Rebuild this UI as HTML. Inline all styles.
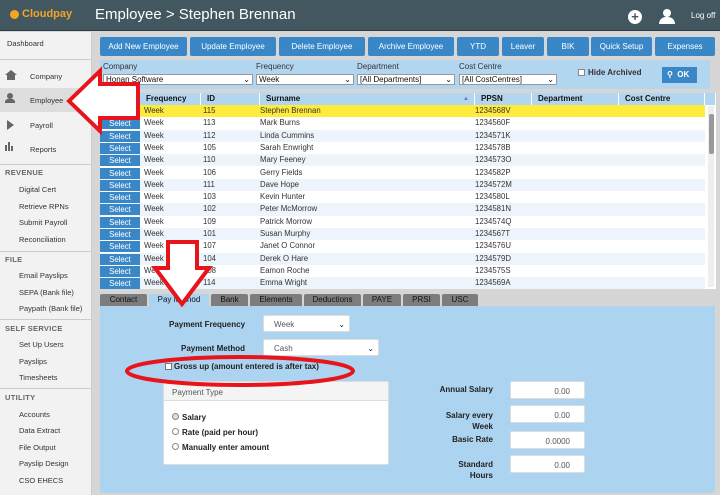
<!DOCTYPE html>
<html><head><meta charset="utf-8"><style>
*{box-sizing:border-box;margin:0;padding:0}
body{width:720px;height:495px;overflow:hidden;font-family:"Liberation Sans",Arial,sans-serif;font-size:8px;color:#222;position:relative;background:#d6d6d6}
.a{position:absolute}
.hdr{left:0;top:0;width:720px;height:31px;background:#435761;border-bottom:1px solid #2e3e46}
.side{left:0;top:32px;width:92px;height:463px;background:#f2f2f2;border-right:1px solid #ccc}
.si{position:absolute;left:19px;font-size:7.5px;color:#333}
.sh{position:absolute;left:5px;font-size:7.5px;color:#666;font-weight:bold;letter-spacing:.3px}
.sep{position:absolute;left:0;width:92px;height:1px;background:#ccc}
.btn{position:absolute;top:37px;height:19px;background:#3a87c8;color:#fff;font-size:8px;text-align:center;line-height:19px;border-radius:2px}
.filt{left:100px;top:60px;width:610px;height:29px;background:#b3d6f0}
.sel{position:absolute;height:11px;background:#fff;border:1px solid #999;font-size:8px;line-height:9px;padding-left:2px;color:#111}
.row{position:absolute;left:100px;width:605px;height:12.3px;font-size:7.8px;line-height:12px;color:#333}
.row span{position:absolute}
.sb{left:0;width:40px;height:11px;background:#3a87c8;color:#fff;text-align:center;top:1px;line-height:11px}
.th{position:absolute;top:93px;height:12px;background:#b3d6f0;font-weight:bold;font-size:8px;line-height:12px;border-right:1px solid #fff;padding-left:6px;color:#111}
.tab{position:absolute;top:294px;height:12px;background:#7d7d7d;color:#111;font-size:8px;text-align:center;line-height:12px;border-radius:2px 2px 0 0}
.panel{left:100px;top:306px;width:615px;height:187px;background:#acd3f0;border-radius:0 0 3px 3px}
.lb{position:absolute;font-weight:bold;font-size:8px;color:#222}
.inp{position:absolute;background:#fff;border:1px solid #ddd;border-radius:2px;font-size:8px;color:#555}
</style></head><body>
<div class="a hdr"></div>
<div class="a" style="left:10px;top:10px;width:9px;height:9px;border-radius:50%;background:#f4a623"></div>
<div class="a" style="left:22px;top:8px;color:#f0a52a;font-weight:bold;font-size:11px">Cloudpay</div>
<div class="a" style="left:95px;top:6px;color:#fff;font-size:15px">Employee &gt; Stephen Brennan</div>
<div class="a" style="left:628px;top:10px;width:14px;height:14px;border-radius:50%;background:#fff;color:#435761;font-weight:bold;font-size:13px;line-height:13px;text-align:center">+</div>
<div class="a" style="left:663px;top:9px;width:8px;height:8px;border-radius:50%;background:#fff"></div>
<div class="a" style="left:659px;top:17px;width:16px;height:7px;border-radius:7px 7px 0 0;background:#fff"></div>
<div class="a" style="left:691px;top:11px;color:#fff;font-size:8px">Log off</div>

<div class="a side"></div>
<div class="a" style="left:0;top:88px;width:92px;height:24px;background:#ddd"></div>
<div class="si" style="left:7px;top:39px">Dashboard</div>
<div class="sep" style="top:59px"></div>
<div class="a" style="left:5px;top:70px;width:0;height:0;border-left:6px solid transparent;border-right:6px solid transparent;border-bottom:5px solid #666"></div>
<div class="a" style="left:7px;top:75px;width:8px;height:5px;background:#666"></div>
<div class="si" style="left:30px;top:72px">Company</div>
<div class="a" style="left:7px;top:93px;width:6px;height:6px;border-radius:50%;background:#666"></div>
<div class="a" style="left:5px;top:99px;width:10px;height:4px;background:#666;border-radius:3px 3px 0 0"></div>
<div class="si" style="left:30px;top:96px">Employee</div>
<div class="a" style="left:7px;top:120px;width:0;height:0;border-top:5px solid transparent;border-bottom:5px solid transparent;border-left:7px solid #666"></div>
<div class="si" style="left:30px;top:121px">Payroll</div>
<div class="a" style="left:5px;top:145px;width:2px;height:6px;background:#666"></div>
<div class="a" style="left:8px;top:142px;width:2px;height:9px;background:#666"></div>
<div class="a" style="left:11px;top:146px;width:2px;height:5px;background:#666"></div>
<div class="si" style="left:30px;top:145px">Reports</div>
<div class="sep" style="top:164px"></div>
<div class="sh" style="top:168px">REVENUE</div>
<div class="si" style="top:185px">Digital Cert</div>
<div class="si" style="top:202px">Retrieve RPNs</div>
<div class="si" style="top:218px">Submit Payroll</div>
<div class="si" style="top:235px">Reconciliation</div>
<div class="sep" style="top:251px"></div>
<div class="sh" style="top:255px">FILE</div>
<div class="si" style="top:271px">Email Payslips</div>
<div class="si" style="top:288px">SEPA (Bank file)</div>
<div class="si" style="top:304px">Paypath (Bank file)</div>
<div class="sep" style="top:319px"></div>
<div class="sh" style="top:324px">SELF SERVICE</div>
<div class="si" style="top:340px">Set Up Users</div>
<div class="si" style="top:357px">Payslips</div>
<div class="si" style="top:373px">Timesheets</div>
<div class="sep" style="top:388px"></div>
<div class="sh" style="top:393px">UTILITY</div>
<div class="si" style="top:410px">Accounts</div>
<div class="si" style="top:426px">Data Extract</div>
<div class="si" style="top:443px">File Output</div>
<div class="si" style="top:459px">Payslip Design</div>
<div class="si" style="top:476px">CSO EHECS</div>

<div class="btn" style="left:100px;width:87px">Add New Employee</div>
<div class="btn" style="left:190px;width:86px">Update Employee</div>
<div class="btn" style="left:279px;width:86px">Delete Employee</div>
<div class="btn" style="left:368px;width:86px">Archive Employee</div>
<div class="btn" style="left:457px;width:42px">YTD</div>
<div class="btn" style="left:502px;width:42px">Leaver</div>
<div class="btn" style="left:547px;width:42px">BIK</div>
<div class="btn" style="left:591px;width:61px">Quick Setup</div>
<div class="btn" style="left:655px;width:60px">Expenses</div>

<div class="a filt"></div>
<div class="a" style="left:103px;top:62px;font-size:8px;color:#333">Company</div>
<div class="a" style="left:256px;top:62px;font-size:8px;color:#333">Frequency</div>
<div class="a" style="left:357px;top:62px;font-size:8px;color:#333">Department</div>
<div class="a" style="left:459px;top:62px;font-size:8px;color:#333">Cost Centre</div>
<div class="sel" style="left:103px;top:74px;width:150px">Honan Software<span style="position:absolute;right:2px">⌄</span></div>
<div class="sel" style="left:256px;top:74px;width:98px">Week<span style="position:absolute;right:2px">⌄</span></div>
<div class="sel" style="left:357px;top:74px;width:98px">[All Departments]<span style="position:absolute;right:2px">⌄</span></div>
<div class="sel" style="left:459px;top:74px;width:98px">[All CostCentres]<span style="position:absolute;right:2px">⌄</span></div>
<div class="a" style="left:578px;top:69px;width:7px;height:7px;background:#fff;border:1px solid #888"></div>
<div class="a" style="left:588px;top:68px;font-weight:bold;color:#333">Hide Archived</div>
<div class="a" style="left:662px;top:67px;width:35px;height:16px;background:#3a87c8;color:#fff;font-weight:bold;line-height:16px;padding-left:5px">&#9906;&nbsp;&nbsp;OK</div>

<div class="a" style="left:100px;top:93px;width:616px;height:196px;background:#fff"></div>
<div class="th" style="left:100px;width:40px"></div>
<div class="th" style="left:140px;width:61px">Frequency</div>
<div class="th" style="left:201px;width:59px">ID</div>
<div class="th" style="left:260px;width:215px">Surname<span style="position:absolute;right:5px;color:#77a;font-size:6px">▲</span></div>
<div class="th" style="left:475px;width:57px">PPSN</div>
<div class="th" style="left:532px;width:87px">Department</div>
<div class="th" style="left:619px;width:86px">Cost Centre</div>
<div class="th" style="left:705px;width:11px"></div>
<div class="a" style="left:708px;top:106px;width:6px;height:181px;background:#eee"></div>
<div class="a" style="left:709px;top:114px;width:5px;height:40px;background:#999;border-radius:2px"></div>

<div class="row" style="top:105px;background:#ffeb3b"><span class="sb">Select</span><span style="left:44px">Week</span><span style="left:103px">115</span><span style="left:160px">Stephen Brennan</span><span style="left:375px">1234568V</span></div>
<div class="row" style="top:117.3px;background:#fff"><span class="sb">Select</span><span style="left:44px">Week</span><span style="left:103px">113</span><span style="left:160px">Mark Burns</span><span style="left:375px">1234560F</span></div>
<div class="row" style="top:129.6px;background:#eef4fb"><span class="sb">Select</span><span style="left:44px">Week</span><span style="left:103px">112</span><span style="left:160px">Linda Cummins</span><span style="left:375px">1234571K</span></div>
<div class="row" style="top:141.9px;background:#fff"><span class="sb">Select</span><span style="left:44px">Week</span><span style="left:103px">105</span><span style="left:160px">Sarah Enwright</span><span style="left:375px">1234578B</span></div>
<div class="row" style="top:154.2px;background:#eef4fb"><span class="sb">Select</span><span style="left:44px">Week</span><span style="left:103px">110</span><span style="left:160px">Mary Feeney</span><span style="left:375px">1234573O</span></div>
<div class="row" style="top:166.5px;background:#fff"><span class="sb">Select</span><span style="left:44px">Week</span><span style="left:103px">106</span><span style="left:160px">Gerry Fields</span><span style="left:375px">1234582P</span></div>
<div class="row" style="top:178.8px;background:#eef4fb"><span class="sb">Select</span><span style="left:44px">Week</span><span style="left:103px">111</span><span style="left:160px">Dave Hope</span><span style="left:375px">1234572M</span></div>
<div class="row" style="top:191.1px;background:#fff"><span class="sb">Select</span><span style="left:44px">Week</span><span style="left:103px">103</span><span style="left:160px">Kevin Hunter</span><span style="left:375px">1234580L</span></div>
<div class="row" style="top:203.4px;background:#eef4fb"><span class="sb">Select</span><span style="left:44px">Week</span><span style="left:103px">102</span><span style="left:160px">Peter McMorrow</span><span style="left:375px">1234581N</span></div>
<div class="row" style="top:215.7px;background:#fff"><span class="sb">Select</span><span style="left:44px">Week</span><span style="left:103px">109</span><span style="left:160px">Patrick Morrow</span><span style="left:375px">1234574Q</span></div>
<div class="row" style="top:228px;background:#eef4fb"><span class="sb">Select</span><span style="left:44px">Week</span><span style="left:103px">101</span><span style="left:160px">Susan Murphy</span><span style="left:375px">1234567T</span></div>
<div class="row" style="top:240.3px;background:#fff"><span class="sb">Select</span><span style="left:44px">Week</span><span style="left:103px">107</span><span style="left:160px">Janet O Connor</span><span style="left:375px">1234576U</span></div>
<div class="row" style="top:252.6px;background:#eef4fb"><span class="sb">Select</span><span style="left:44px">Week</span><span style="left:103px">104</span><span style="left:160px">Derek O Hare</span><span style="left:375px">1234579D</span></div>
<div class="row" style="top:264.9px;background:#fff"><span class="sb">Select</span><span style="left:44px">Week</span><span style="left:103px">108</span><span style="left:160px">Eamon Roche</span><span style="left:375px">1234575S</span></div>
<div class="row" style="top:277.2px;background:#eef4fb"><span class="sb">Select</span><span style="left:44px">Week</span><span style="left:103px">114</span><span style="left:160px">Emma Wright</span><span style="left:375px">1234569A</span></div>

<div class="tab" style="left:100px;width:47px">Contact</div>
<div class="tab" style="left:149px;width:60px;background:#acd3f0">Pay Method</div>
<div class="tab" style="left:211px;width:37px">Bank</div>
<div class="tab" style="left:250px;width:52px">Elements</div>
<div class="tab" style="left:304px;width:57px">Deductions</div>
<div class="tab" style="left:363px;width:38px">PAYE</div>
<div class="tab" style="left:403px;width:37px">PRSI</div>
<div class="tab" style="left:442px;width:36px">USC</div>
<div class="a panel"></div>

<div class="lb" style="left:169px;top:320px">Payment Frequency</div>
<div class="inp" style="left:263px;top:315px;width:87px;height:17px;padding:4px 0 0 10px">Week<span style="position:absolute;right:4px;color:#222">⌄</span></div>
<div class="lb" style="left:181px;top:344px">Payment Method</div>
<div class="inp" style="left:263px;top:339px;width:116px;height:17px;padding:4px 0 0 10px">Cash<span style="position:absolute;right:4px;color:#222">⌄</span></div>
<div class="a" style="left:165px;top:363px;width:7px;height:7px;background:#fff;border:1px solid #777"></div>
<div class="lb" style="left:174px;top:362px">Gross up (amount entered is after tax)</div>
<div class="a" style="left:163px;top:381px;width:226px;height:84px;background:#fff;border:1px solid #ddd;border-radius:2px"></div>
<div class="a" style="left:164px;top:382px;width:224px;height:19px;background:#f4f4f4;border-bottom:1px solid #ddd"></div>
<div class="a" style="left:172px;top:388px;color:#555">Payment Type</div>
<div class="a" style="left:172px;top:413px;width:7px;height:7px;border-radius:50%;border:1px solid #888;background:#ddd"></div>
<div class="lb" style="left:182px;top:413px">Salary</div>
<div class="a" style="left:172px;top:428px;width:7px;height:7px;border-radius:50%;border:1px solid #888;background:#fff"></div>
<div class="lb" style="left:182px;top:428px">Rate (paid per hour)</div>
<div class="a" style="left:172px;top:443px;width:7px;height:7px;border-radius:50%;border:1px solid #888;background:#fff"></div>
<div class="lb" style="left:182px;top:443px">Manually enter amount</div>

<div class="lb" style="left:438px;top:385px;width:55px;text-align:right">Annual Salary</div>
<div class="inp" style="left:510px;top:381px;width:75px;height:18px;text-align:right;padding:5px 14px 0 0">0.00</div>
<div class="lb" style="left:420px;top:410px;width:73px;text-align:right;line-height:11px">Salary every<br>Week</div>
<div class="inp" style="left:510px;top:405px;width:75px;height:18px;text-align:right;padding:5px 14px 0 0">0.00</div>
<div class="lb" style="left:420px;top:435px;width:73px;text-align:right">Basic Rate</div>
<div class="inp" style="left:510px;top:431px;width:75px;height:18px;text-align:right;padding:5px 14px 0 0">0.0000</div>
<div class="lb" style="left:420px;top:459px;width:73px;text-align:right;line-height:11px">Standard<br>Hours</div>
<div class="inp" style="left:510px;top:455px;width:75px;height:18px;text-align:right;padding:5px 14px 0 0">0.00</div>

<svg class="a" style="left:0;top:0" width="720" height="495">
<polygon points="69,101 100,71 100,84 138,84 138,118 100,118 100,131" fill="#fff" stroke="#e8141c" stroke-width="4" stroke-linejoin="miter"/>
<polygon points="168,242 197,242 197,268 209,268 182,304 155,268 168,268" fill="#fff" stroke="#e8141c" stroke-width="4"/>
<ellipse cx="240" cy="371" rx="113" ry="14" fill="none" stroke="#e8141c" stroke-width="4"/>
</svg>
</body></html>
